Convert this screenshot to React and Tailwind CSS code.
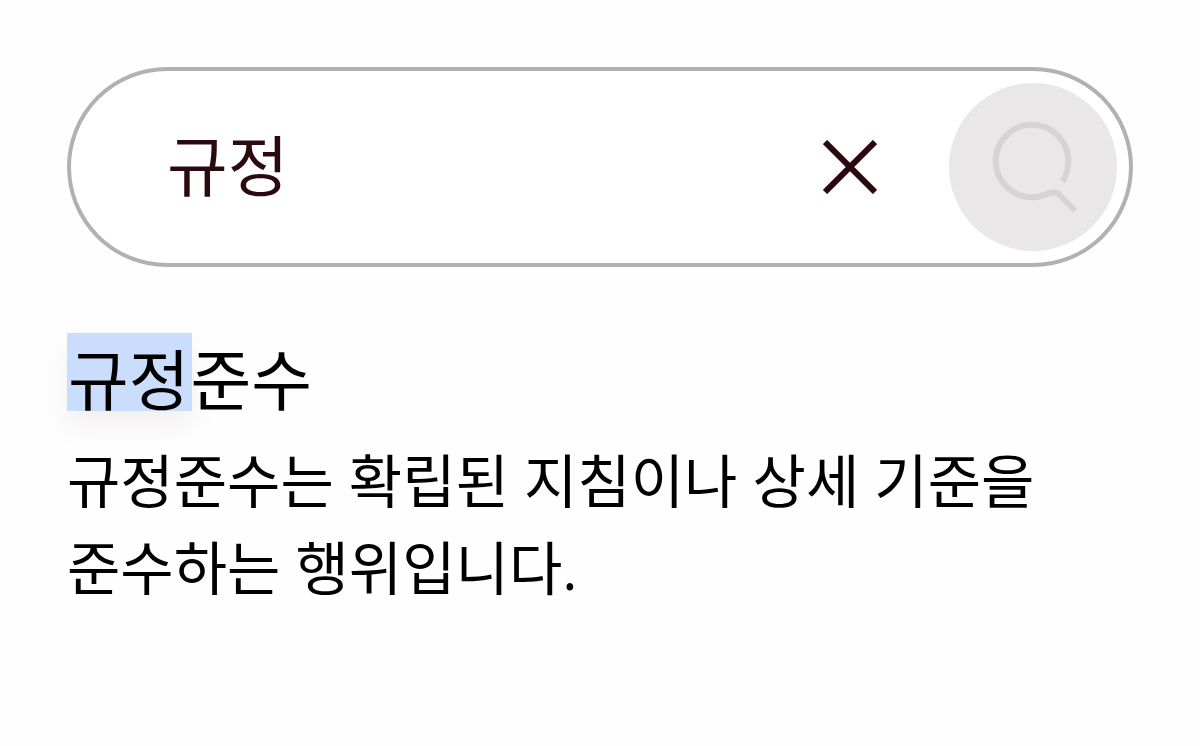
import React, { useState } from 'react';

const results = [
  {
    id: 1,
    term: '규정준수',
    description: '규정준수는 확립된 지침이나 상세 기준을 준수하는 행위입니다.',
  },
];

const ClearIcon = () => (
  <svg className="w-[54px] h-[54px]" viewBox="0 0 54 54" fill="none" stroke="#2b0a0f" strokeWidth="6" aria-hidden="true">
    <path d="M2 2L52 52M52 2L2 52" />
  </svg>
);

const SearchIcon = () => (
  <svg className="w-full h-full" viewBox="0 0 168 168" fill="none" stroke="#d5d4d4" strokeWidth="6" aria-hidden="true">
    <path d="M113.500 98.500C117.500 92.500 119.300 86 119.300 78A36.300 36.300 0 1 0 83 114.300C95 114.300 97 109.500 104.500 109.500Q108 109.500 110 111.500L126 127.500" />
  </svg>
);

export const SearchBar = (props) => {
  const { value, onChange } = props;
  return (
    <form
      role="search"
      onSubmit={(e) => e.preventDefault()}
      className="flex items-center w-full h-[200px] pl-24 pr-3 border-4 border-[#b0b2b2] rounded-full bg-white"
    >
      <input
        type="text"
        aria-label="검색어"
        value={value}
        onChange={(e) => onChange(e.target.value)}
        className="flex-1 min-w-0 pb-1 text-[66px] leading-[96px] text-[#2b0a0f] bg-transparent outline-none"
      />
      <button
        type="button"
        aria-label="지우기"
        onClick={() => onChange('')}
        className="flex justify-center items-center flex-shrink-0 w-[54px] h-[54px] mr-[72px]"
      >
        <ClearIcon />
      </button>
      <button
        type="submit"
        aria-label="검색"
        className="flex-shrink-0 w-[168px] h-[168px] rounded-full bg-[#e9e7e8]"
      >
        <SearchIcon />
      </button>
    </form>
  );
};

export const ResultItem = (props) => {
  const { item, query } = props;
  const matched = query && item?.term.startsWith(query);
  const rest = matched ? item?.term.slice(query.length) : item?.term;
  return (
    <article>
      <h2 className="text-[66px] leading-[92px]">
        {matched && (
          <mark className="inline-block h-[78px] pl-px pr-[3px] -mr-[2px] bg-[#cbddfc] text-black shadow-[0_16px_28px_rgba(60,10,20,0.06)]">
            {query}
          </mark>
        )}
        <span className="relative">{rest}</span>
      </h2>
      <p className="mt-3 text-[58px] leading-[87px] break-keep">{item?.description}</p>
    </article>
  );
};

export default function App() {
  const [query, setQuery] = useState('규정');
  return (
    <main className="min-h-screen p-[67px] bg-[#fefefe] text-black font-['Open_Sans','Noto_Sans_CJK_KR',sans-serif]">
      <SearchBar value={query} onChange={setQuery} />
      <section className="mt-[66px]">
        {results.map((item) => (
          <ResultItem key={item.id} item={item} query={query} />
        ))}
      </section>
    </main>
  );
}
